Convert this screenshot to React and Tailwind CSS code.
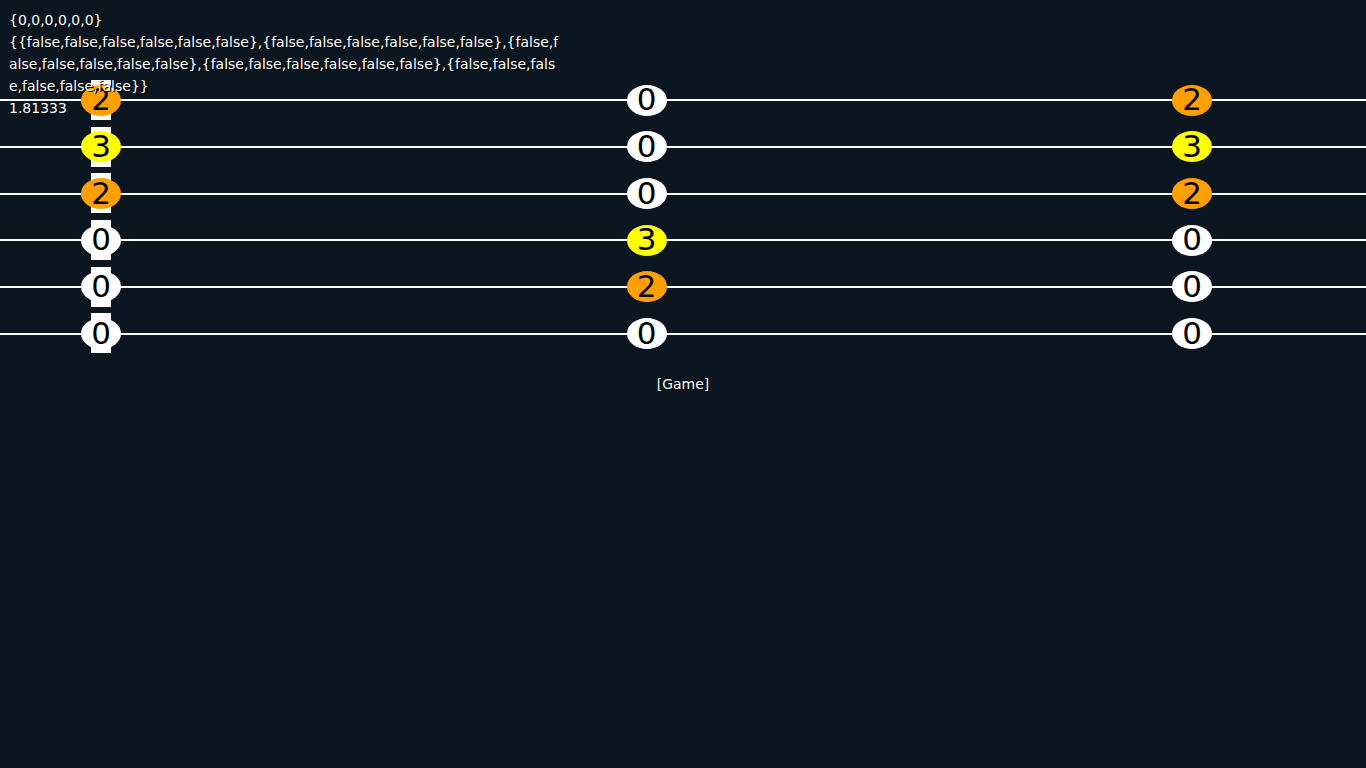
import React from "react";

const grid = [
  [2, 0, 2],
  [3, 0, 3],
  [2, 0, 2],
  [0, 3, 0],
  [0, 2, 0],
  [0, 0, 0],
];

const colorFor = (v) =>
  v === 3 ? "bg-[#ffff00]" : v === 2 ? "bg-[#ffa000]" : "bg-white";

function Cell({ v, bar }) {
  return (
    <div className="relative w-[40px] h-full flex items-center justify-center">
      {bar && <div className="absolute left-[10px] top-[3px] w-[20px] h-[40px] bg-white" />}
      <div
        className={`relative w-[40px] h-[31px] rounded-[50%] ${colorFor(v)} flex items-center justify-center text-black text-[31px] leading-none`}
        style={{ fontFamily: '"DejaVu Sans", sans-serif' }}
      >
        <span className="-mt-[1px]">{v}</span>
      </div>
    </div>
  );
}

export default function App() {
  const text =
    "{{false,false,false,false,false,false},{false,false,false,false,false,false},{false,false,false,false,false,false},{false,false,false,false,false,false},{false,false,false,false,false,false}}";
  return (
    <div className="relative min-h-screen bg-[#0c1620] text-white">
      <div className="pt-[77px]">
        {grid.map((row, i) => (
          <div key={i} className="relative h-[46.67px] flex items-center">
            <div className="absolute left-0 right-0 top-1/2 -translate-y-1/2 h-[2px] bg-white" />
            <div className="relative flex h-full pl-[81px] gap-[505.5px]">
              {row.map((v, j) => (
                <Cell key={j} v={v} bar={j === 0} />
              ))}
            </div>
          </div>
        ))}
      </div>
      <div
        className="text-center text-[14px] leading-[20px] mt-[17px] [text-shadow:1px_1px_0_#000]"
        style={{ fontFamily: '"DejaVu Sans", sans-serif' }}
      >
        [Game]
      </div>
      <div
        className="absolute top-[9px] left-[9px] w-[556px] text-[14px] leading-[22px] break-all [text-shadow:1px_1px_0_#000]"
        style={{ fontFamily: '"DejaVu Sans", sans-serif' }}
      >
        <div>{"{0,0,0,0,0,0}"}</div>
        <div>{text}</div>
        <div>1.81333</div>
      </div>
    </div>
  );
}
